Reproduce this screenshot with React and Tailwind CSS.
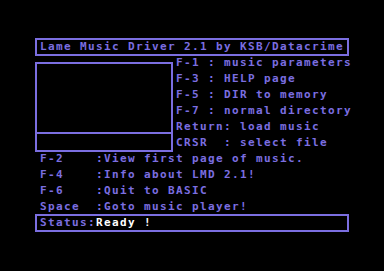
import React from "react";

const blue = "text-[#7b6ee0]";

function Line({ children, className = "" }) {
	return <div className={`h-[14px] leading-[14px] whitespace-pre ${className}`}>{children}</div>;
}

export default function App() {
	const menu = [
		"F-1 : music parameters",
		"F-3 : HELP page",
		"F-5 : DIR to memory",
		"F-7 : normal directory",
		"Return: load music",
		"CRSR  : select file",
	];
	const keys = [
		"F-2    :View first page of music.",
		"F-4    :Info about LMD 2.1!",
		"F-6    :Quit to BASIC",
		"Space  :Goto music player!",
	];

	return (
		<div
			className={`w-[384px] h-[271px] bg-black pt-[38px] pl-[35px] ${blue} text-[11px] font-bold tracking-[1.38px] overflow-hidden`}
			style={{ fontFamily: '"DejaVu Sans Mono", "Liberation Mono", monospace' }}
		>
			<div className="w-[314px] h-[18px] border-2 border-[#7b6ee0] pl-[3px]">
				<Line>Lame Music Driver 2.1 by KSB/Datacrime</Line>
			</div>

			<div className="flex items-start">
				<div className="mt-[6px] w-[138px] h-[90px] border-2 border-[#7b6ee0]">
					<div className="h-[70px] border-b-2 border-[#7b6ee0]" />
				</div>
				<div className="ml-[3px] flex flex-col gap-[2px]">
					{menu.map((m) => (
						<Line key={m}>{m}</Line>
					))}
				</div>
			</div>

			<div className="pl-[5px] flex flex-col gap-[2px]">
				{keys.map((k) => (
					<Line key={k}>{k}</Line>
				))}
			</div>

			<div className="w-[314px] h-[18px] border-2 border-[#7b6ee0] pl-[3px]">
				<Line>
					Status:<span className="text-white">Ready !</span>
				</Line>
			</div>
		</div>
	);
}
